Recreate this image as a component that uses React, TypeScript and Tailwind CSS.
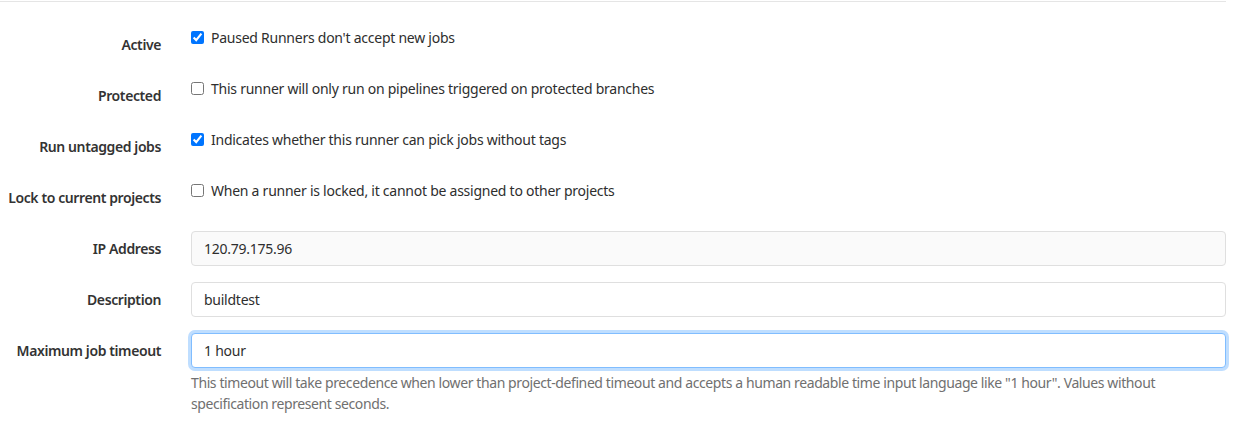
import React, { useEffect, useRef } from 'react';

type CheckRow = { label: string; text: string; checked: boolean };

const checkRows: CheckRow[] = [
  { label: 'Active', text: "Paused Runners don't accept new jobs", checked: true },
  { label: 'Protected', text: 'This runner will only run on pipelines triggered on protected branches', checked: false },
  { label: 'Run untagged jobs', text: 'Indicates whether this runner can pick jobs without tags', checked: true },
  { label: 'Lock to current projects', text: 'When a runner is locked, it cannot be assigned to other projects', checked: false },
];

const Label: React.FC<{ children: React.ReactNode }> = ({ children }) => (
  <label className="whitespace-nowrap text-right font-semibold tracking-[-0.4px] text-[#333333] pt-[7px] pb-[7px] leading-[21px]">
    {children}
  </label>
);

const App: React.FC = () => {
  const timeoutRef = useRef<HTMLInputElement>(null);

  useEffect(() => {
    const el = timeoutRef.current;
    if (el) {
      el.focus();
      el.setSelectionRange(2, 2);
    }
  }, []);

  return (
    <div
      className="min-h-screen bg-white text-[14px] leading-[21px] tracking-[-0.25px] text-[#2e2e2e]"
      style={{ fontFamily: '"Noto Sans", "Open Sans", sans-serif' }}
    >
      <div className="pt-px w-[1226px]">
        <div className="border-t border-[#e5e5e5] pt-[25px]">
          <div className="grid grid-cols-[161px_1fr] gap-x-[30px] gap-y-4">
            {checkRows.map((row) => (
              <React.Fragment key={row.label}>
                <Label>{row.label}</Label>
                <div className="flex items-start gap-[7px] h-[35px]">
                  <input
                    type="checkbox"
                    defaultChecked={row.checked}
                    className="mt-[4px] w-[13px] h-[13px] m-0 accent-[#0075ff]"
                  />
                  <span>{row.text}</span>
                </div>
              </React.Fragment>
            ))}

            <Label>IP Address</Label>
            <input
              readOnly
              value="120.79.175.96"
              className="h-[35px] w-full rounded border border-[#dfdfdf] bg-[#fafafa] px-3 tracking-[-0.25px] text-[#2e2e2e] outline-none"
            />

            <Label>Description</Label>
            <input
              defaultValue="buildtest"
              className="h-[35px] w-full rounded border border-[#dfdfdf] bg-white px-3 tracking-[-0.25px] text-[#2e2e2e] outline-none"
            />

            <Label>Maximum job timeout</Label>
            <div>
              <input
                ref={timeoutRef}
                defaultValue="1 hour"
                className="h-[35px] w-full rounded border border-[#80bdff] bg-white px-3 tracking-[-0.25px] text-[#2e2e2e] outline-none shadow-[0_0_0_3px_rgba(0,123,255,0.25)] caret-[#2e2e2e]"
              />
              <p className="mt-1 tracking-[-0.4px] text-[#707070]">
                This timeout will take precedence when lower than project-defined timeout and accepts a human readable time input language like "1 hour". Values without specification represent seconds.
              </p>
            </div>
          </div>
        </div>
      </div>
    </div>
  );
};

export default App;
